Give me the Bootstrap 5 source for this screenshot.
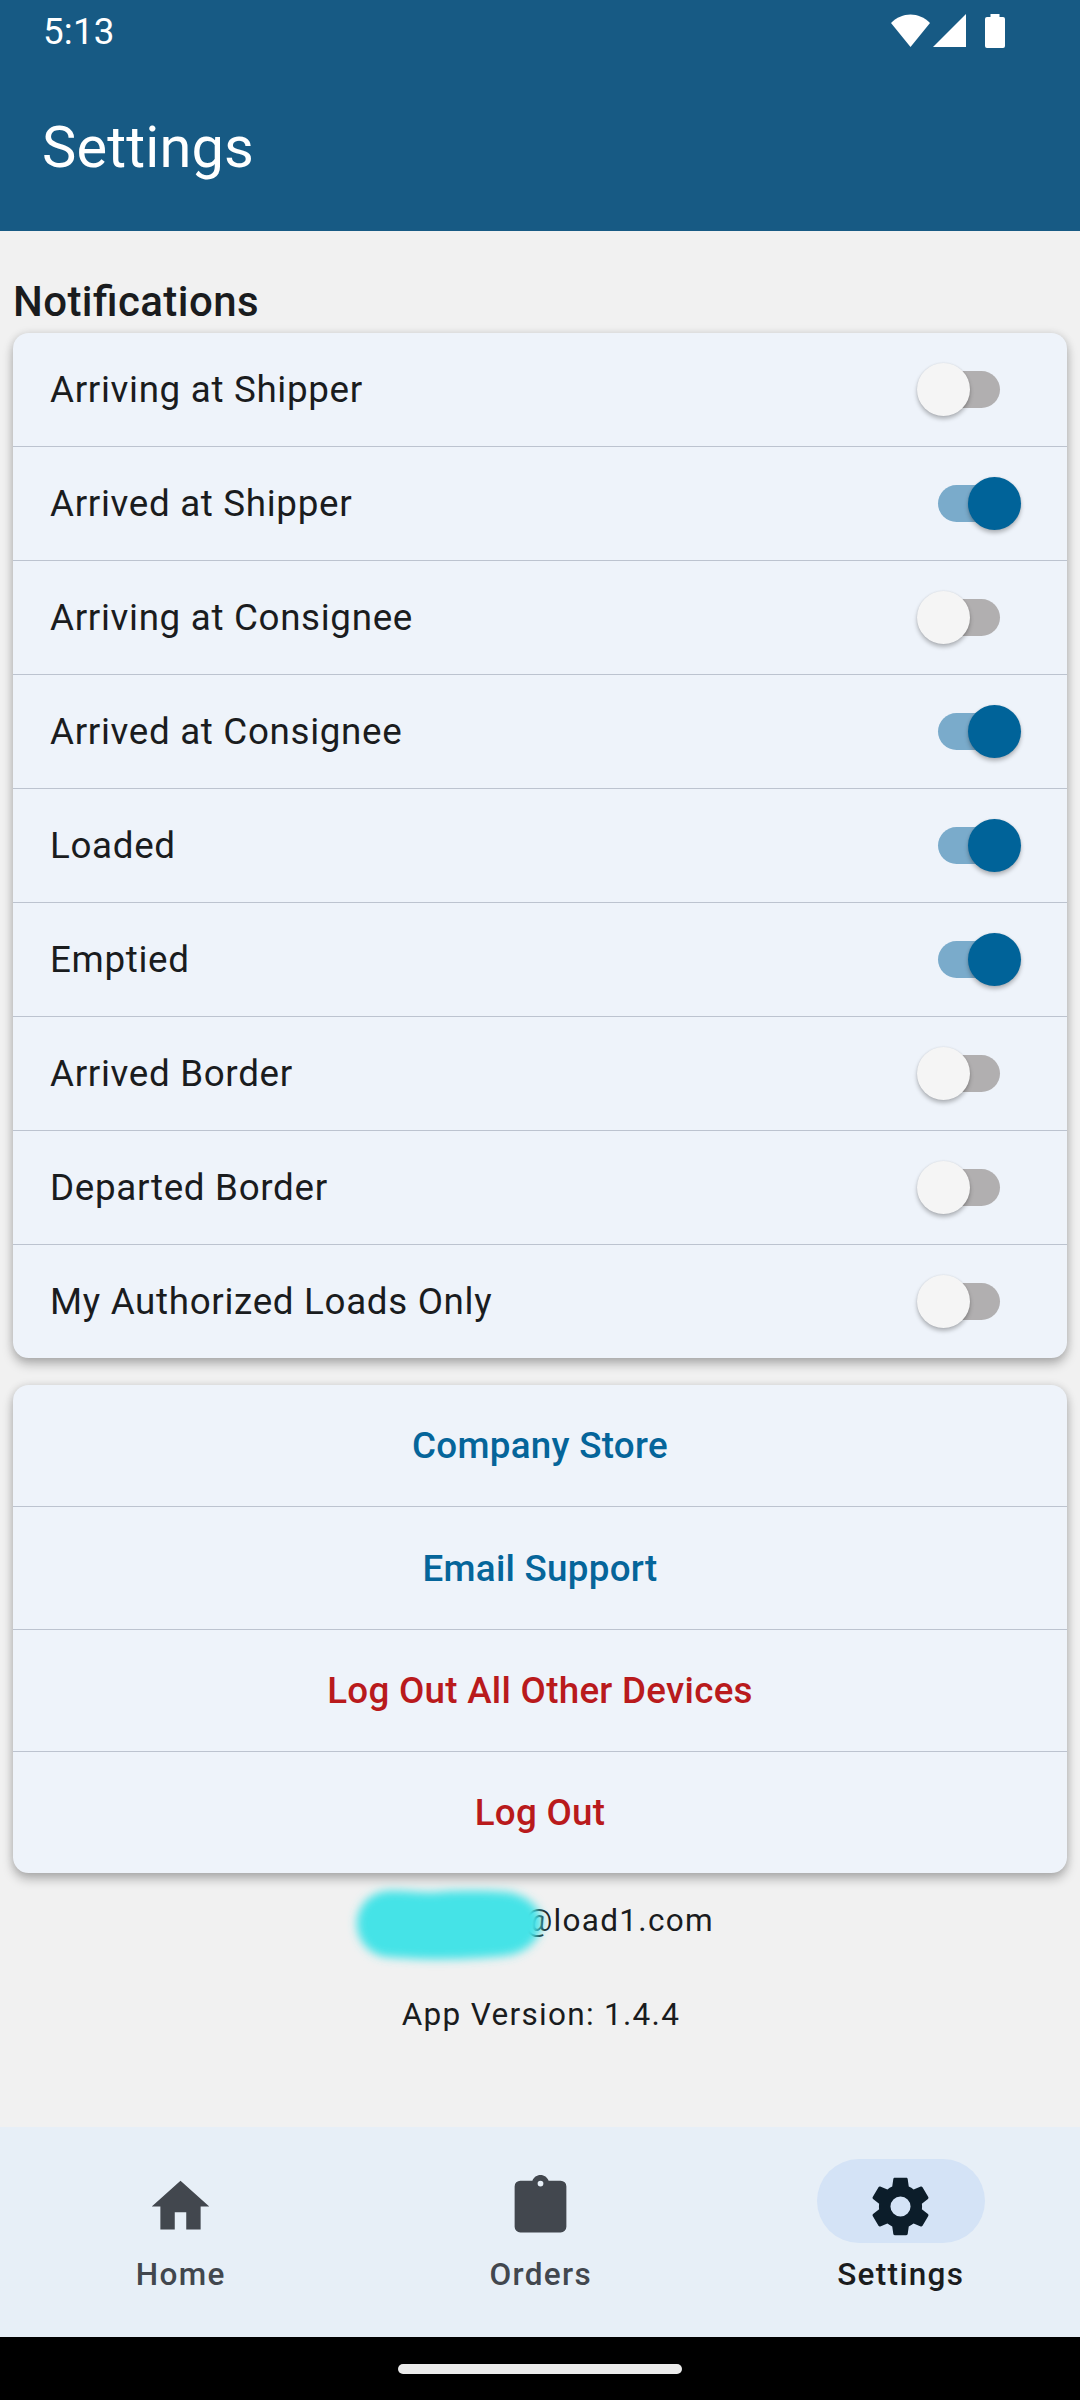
<!DOCTYPE html>
<html lang="en">
<head>
<meta charset="utf-8">
<meta name="viewport" content="width=device-width, initial-scale=1">
<title>Settings</title>
<link rel="stylesheet" href="https://cdn.jsdelivr.net/npm/bootstrap@5.3.0/dist/css/bootstrap.min.css">
<style>
  body { font-family: Roboto, "Noto Sans", sans-serif; background: #f1f1f1; color: #1a1c1e; line-height: 1; width: 1080px; height: 2400px; overflow: hidden; }
  .top-area { background: #175a84; height: 231px; flex: none; }
  .status-row { height: 62px; padding: 0 75px 0 43px; font-size: 36.75px; }
  .status-row span { padding-top: 2px; letter-spacing: .2px; }
  .status-row svg { display: block; }
  .page-title { height: 169px; padding: 2px 0 0 42px; font-size: 57.75px; font-weight: 400; letter-spacing: .15px; }
  .section-title { font-size: 42px; font-weight: 500; padding-left: 13px; height: 42px; line-height: 42px; margin: 50px 0 10px; letter-spacing: .42px; font-feature-settings: "liga" 1; }
  .panel { margin: 0 13px; border: 0; border-radius: 15.75px; background: #eef3fa; box-shadow: 0 6px 11px rgba(0,0,0,.27), 0 0 8px rgba(0,0,0,.1); --bs-list-group-bg: #eef3fa; }
  .panel .list-group-item { border: 0; border-bottom: 1px solid #bcc3cf; background: transparent; color: #1a1c1e; }
  .panel .list-group-item:last-child { border-bottom: 0; }
  .toggle-row { height: 114px; padding: 0 46px 0 37px; font-size: 36.75px; letter-spacing: .68px; }
  .toggle-row b { font-weight: 400; padding-top: 2px; }
  .toggle-row:last-child { height: 113px; }
  .switch { width: 104.5px; height: 52.5px; border: 0; }
  .switch .track { width: 62px; height: 37px; border-radius: 19px; background: #b1afb0; }
  .switch .knob { width: 53px; height: 53px; border-radius: 50%; background: #f5f5f5; box-shadow: 0 3px 4px rgba(0,0,0,.26), 0 0 2px rgba(0,0,0,.1); flex: none; }
  .switch.off .knob { margin-right: -32px; z-index: 1; }
  .switch.off { padding-right: 21px; }
  .switch.on .track { background: #7aabcb; margin-right: -32px; }
  .switch.on .knob { background: #006399; z-index: 1; }
  .action-panel { margin-top: 27px; }
  .panel .action-row { height: 122.35px; padding: 2px 0 0; font-size: 36.75px; font-weight: 500; letter-spacing: .28px; color: #05659a; }
  .panel .action-row:last-child { height: 121px; }
  .panel .danger { color: #b91a1c; }
  .foot-line { font-size: 31.5px; letter-spacing: 1.31px; height: 32px; }
  .mail-line { margin-top: 32px; padding-left: 158px; }
  .scribble { left: 339px; top: 1874px; }
  .version-line { margin-top: 62px; padding-left: 2px; }
  .bottom-nav { background: #e7eff7; height: 210px; flex: none; }
  .tab { width: 360px; padding: 32px 0 0 1.5px; color: #42474e; font-size: 31.5px; font-weight: 500; letter-spacing: 1.31px; text-decoration: none; }
  .tab .pill { width: 168px; height: 84px; border-radius: 42px; padding-top: 12.5px; margin-bottom: 15.5px; }
  .tab.current { color: #1a1c1e; }
  .tab.current .pill { background: #d4e3f6; color: #0c1d2a; }
  .gesture { background: #000; height: 63px; padding-top: 1px; flex: none; }
  .gesture span { width: 284px; height: 10px; border-radius: 5px; background: #ebebeb; }
</style>
</head>
<body class="d-flex flex-column position-relative">
<header class="top-area text-white">
  <div class="status-row d-flex align-items-center justify-content-between">
    <span>5:13</span>
    <svg width="114" height="36" viewBox="0 0 114 36" fill="#fff">
      <path d="M0 10C11-1.500 28-1.500 39 10L19.500 34Z"/>
      <path d="M75 1V34H42Z"/>
      <path d="M99.500 1h9v3h3.500a2 2 0 0 1 2 2v27a2 2 0 0 1-2 2h-16a2 2 0 0 1-2-2v-27a2 2 0 0 1 2-2h3.500z"/>
    </svg>
  </div>
  <h1 class="page-title d-flex align-items-center m-0">Settings</h1>
</header>

<main class="flex-grow-1">
  <h2 class="section-title">Notifications</h2>
  <div class="panel list-group">
    <div class="list-group-item toggle-row d-flex align-items-center justify-content-between"><b>Arriving at Shipper</b><span class="switch off d-flex align-items-center"><i class="knob"></i><i class="track"></i></span></div>
    <div class="list-group-item toggle-row d-flex align-items-center justify-content-between"><b>Arrived at Shipper</b><span class="switch on d-flex align-items-center justify-content-end"><i class="track"></i><i class="knob"></i></span></div>
    <div class="list-group-item toggle-row d-flex align-items-center justify-content-between"><b>Arriving at Consignee</b><span class="switch off d-flex align-items-center"><i class="knob"></i><i class="track"></i></span></div>
    <div class="list-group-item toggle-row d-flex align-items-center justify-content-between"><b>Arrived at Consignee</b><span class="switch on d-flex align-items-center justify-content-end"><i class="track"></i><i class="knob"></i></span></div>
    <div class="list-group-item toggle-row d-flex align-items-center justify-content-between"><b>Loaded</b><span class="switch on d-flex align-items-center justify-content-end"><i class="track"></i><i class="knob"></i></span></div>
    <div class="list-group-item toggle-row d-flex align-items-center justify-content-between"><b>Emptied</b><span class="switch on d-flex align-items-center justify-content-end"><i class="track"></i><i class="knob"></i></span></div>
    <div class="list-group-item toggle-row d-flex align-items-center justify-content-between"><b>Arrived Border</b><span class="switch off d-flex align-items-center"><i class="knob"></i><i class="track"></i></span></div>
    <div class="list-group-item toggle-row d-flex align-items-center justify-content-between"><b>Departed Border</b><span class="switch off d-flex align-items-center"><i class="knob"></i><i class="track"></i></span></div>
    <div class="list-group-item toggle-row d-flex align-items-center justify-content-between"><b>My Authorized Loads Only</b><span class="switch off d-flex align-items-center"><i class="knob"></i><i class="track"></i></span></div>
  </div>

  <div class="panel action-panel list-group">
    <a class="list-group-item action-row d-flex align-items-center justify-content-center">Company Store</a>
    <a class="list-group-item action-row d-flex align-items-center justify-content-center">Email Support</a>
    <a class="list-group-item action-row danger d-flex align-items-center justify-content-center">Log Out All Other Devices</a>
    <a class="list-group-item action-row danger d-flex align-items-center justify-content-center">Log Out</a>
  </div>

  <div class="foot-line mail-line d-flex align-items-center justify-content-center">@load1.com</div>
  <div class="foot-line version-line d-flex align-items-center justify-content-center">App Version: 1.4.4</div>
</main>

<!-- marker stroke hiding the account name -->
<svg class="scribble position-absolute" width="230" height="105" viewBox="0 0 230 105">
  <defs>
    <filter id="soft" x="-20%" y="-30%" width="140%" height="160%"><feGaussianBlur stdDeviation="5"/></filter>
  </defs>
  <path d="M48 17C68 16 82 20 100 18C125 16 150 17 168 18C188 21 202 34 203 47C203 64 188 80 164 82C150 83 130 85 110 85C90 86 65 84 48 83C30 81 18 66 18 50C18 34 29 19 48 17Z" fill="#45e3e7" filter="url(#soft)"/>
</svg>

<nav class="bottom-nav d-flex">
  <a class="tab d-flex flex-column align-items-center">
    <span class="pill d-flex justify-content-center"><svg width="69" height="69" viewBox="0 0 24 24" fill="currentColor"><path d="M10 20v-6h4v6h5v-8h3L12 3 2 12h3v8z"/></svg></span>Home</a>
  <a class="tab d-flex flex-column align-items-center">
    <span class="pill d-flex justify-content-center"><svg width="69" height="69" viewBox="0 0 24 24" fill="currentColor" fill-rule="evenodd"><path d="M19 3H14.820C14.400 1.840 13.300 1 12 1C10.700 1 9.600 1.840 9.180 3H5A2 2 0 0 0 3 5V19A2 2 0 0 0 5 21H19A2 2 0 0 0 21 19V5A2 2 0 0 0 19 3M12 3A1 1 0 0 1 13 4A1 1 0 0 1 12 5A1 1 0 0 1 11 4A1 1 0 0 1 12 3"/></svg></span>Orders</a>
  <a class="tab current d-flex flex-column align-items-center">
    <span class="pill d-flex justify-content-center"><svg width="69" height="69" viewBox="0 0 24 24" fill="currentColor"><path d="M12,15.5A3.5,3.5 0 0,1 8.5,12A3.5,3.5 0 0,1 12,8.5A3.5,3.5 0 0,1 15.5,12A3.5,3.5 0 0,1 12,15.5M19.43,12.97C19.47,12.65 19.5,12.33 19.5,12C19.5,11.67 19.47,11.34 19.43,11L21.54,9.37C21.73,9.22 21.78,8.95 21.66,8.73L19.66,5.27C19.54,5.05 19.27,4.96 19.05,5.05L16.56,6.05C16.04,5.66 15.5,5.32 14.87,5.07L14.5,2.42C14.46,2.18 14.25,2 14,2H10C9.75,2 9.54,2.18 9.5,2.42L9.13,5.07C8.5,5.32 7.96,5.66 7.44,6.05L4.95,5.05C4.73,4.96 4.46,5.05 4.34,5.27L2.34,8.73C2.21,8.95 2.27,9.22 2.46,9.37L4.57,11C4.53,11.34 4.5,11.67 4.5,12C4.5,12.33 4.53,12.65 4.57,12.97L2.46,14.63C2.27,14.78 2.21,15.05 2.34,15.27L4.34,18.73C4.46,18.95 4.73,19.03 4.95,18.95L7.44,17.94C7.96,18.34 8.5,18.68 9.13,18.93L9.5,21.58C9.54,21.82 9.75,22 10,22H14C14.25,22 14.46,21.82 14.5,21.58L14.87,18.93C15.5,18.67 16.04,18.34 16.56,17.94L19.05,18.95C19.27,19.03 19.54,18.95 19.66,18.73L21.66,15.27C21.78,15.05 21.73,14.78 21.54,14.63L19.43,12.97Z"/></svg></span>Settings</a>
</nav>
<div class="gesture d-flex align-items-center justify-content-center"><span></span></div>
<script src="https://cdn.jsdelivr.net/npm/bootstrap@5.3.0/dist/js/bootstrap.bundle.min.js"></script>
</body>
</html>
